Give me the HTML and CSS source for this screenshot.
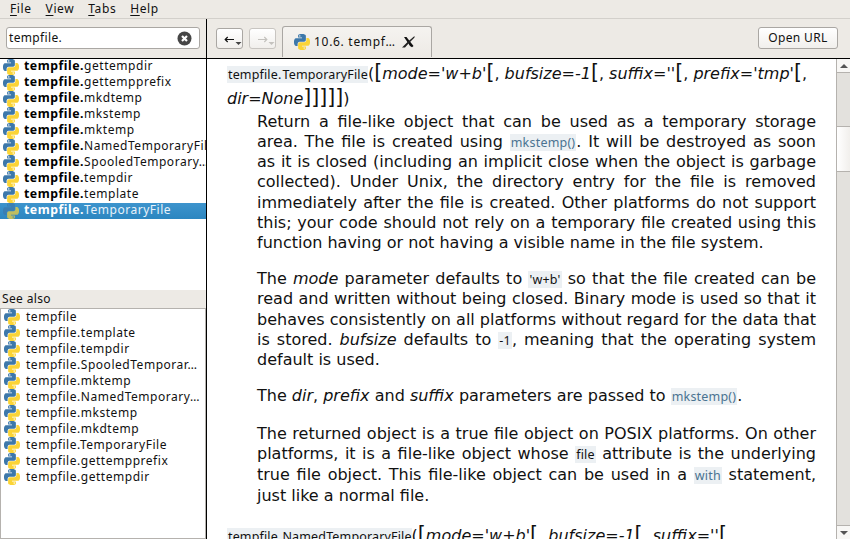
FILE: index.html
```html
<!DOCTYPE html>
<html lang="en">
<head>
<meta charset="utf-8">
<title>Documentation browser</title>
<link rel="stylesheet" href="styles.css">
</head>
<body>
<svg class="defs" width="0" height="0">
  <defs>
    <path id="snake" d="M14.25.18l.9.2.73.26.59.3.45.32.34.34.25.34.16.33.1.3.04.26.02.2-.01.13V8.5l-.05.63-.13.55-.21.46-.26.38-.3.31-.33.25-.35.19-.35.14-.33.1-.3.07-.26.04-.21.02H8.77l-.69.05-.59.14-.5.22-.41.27-.33.32-.27.35-.2.36-.15.37-.1.35-.07.32-.04.27-.02.21v3.06H3.17l-.21-.03-.28-.07-.32-.12-.35-.18-.36-.26-.36-.36-.35-.46-.32-.59-.28-.73-.21-.88-.14-1.05-.05-1.23.06-1.22.16-1.04.24-.87.32-.71.36-.57.4-.44.42-.33.42-.24.4-.16.36-.1.32-.05.24-.01h.16l.06.01h8.16v-.83H6.18l-.01-2.75-.02-.37.05-.34.11-.31.17-.28.25-.26.31-.23.38-.2.44-.18.51-.15.58-.12.64-.1.71-.06.77-.04.84-.02 1.27.05zm-6.3 1.98l-.23.33-.08.41.08.41.23.34.33.22.41.09.41-.09.33-.22.23-.34.08-.41-.08-.41-.23-.33-.33-.22-.41-.09-.41.09z"/>
    <symbol id="py" viewBox="0 0 24 24"><use href="#snake" fill="#3d78aa"/><use href="#snake" fill="#fbd436" transform="rotate(180 12 12)"/></symbol>
  </defs>
</svg>
<nav class="menu"><span><u>F</u>ile</span><span><u>V</u>iew</span><span><u>T</u>abs</span><span><u>H</u>elp</span></nav>
<div class="window">
  <aside class="side">
    <div class="searchbar"><div class="search"><span>tempfile.</span>
      <svg width="15" height="15" viewBox="0 0 15 15"><circle cx="7.5" cy="7.5" r="7" fill="#464646"/><path d="M5 5l5 5M10 5l-5 5" stroke="#fff" stroke-width="2.2"/></svg></div></div>
    <ul class="list results">
      <li><svg><use href="#py"/></svg><span><b>tempfile.</b>gettempdir</span></li>
      <li><svg><use href="#py"/></svg><span><b>tempfile.</b>gettempprefix</span></li>
      <li><svg><use href="#py"/></svg><span><b>tempfile.</b>mkdtemp</span></li>
      <li><svg><use href="#py"/></svg><span><b>tempfile.</b>mkstemp</span></li>
      <li><svg><use href="#py"/></svg><span><b>tempfile.</b>mktemp</span></li>
      <li><svg><use href="#py"/></svg><span><b>tempfile.</b>NamedTemporaryFile</span></li>
      <li><svg><use href="#py"/></svg><span><b>tempfile.</b>SpooledTemporary…</span></li>
      <li><svg><use href="#py"/></svg><span><b>tempfile.</b>tempdir</span></li>
      <li><svg><use href="#py"/></svg><span><b>tempfile.</b>template</span></li>
      <li class="selected"><svg><use href="#py"/></svg><span><b>tempfile.</b>TemporaryFile</span></li>
    </ul>
    <div class="heading">See also</div>
    <ul class="list related">
      <li><svg><use href="#py"/></svg><span>tempfile</span></li>
      <li><svg><use href="#py"/></svg><span>tempfile.template</span></li>
      <li><svg><use href="#py"/></svg><span>tempfile.tempdir</span></li>
      <li><svg><use href="#py"/></svg><span>tempfile.SpooledTemporar…</span></li>
      <li><svg><use href="#py"/></svg><span>tempfile.mktemp</span></li>
      <li><svg><use href="#py"/></svg><span>tempfile.NamedTemporary…</span></li>
      <li><svg><use href="#py"/></svg><span>tempfile.mkstemp</span></li>
      <li><svg><use href="#py"/></svg><span>tempfile.mkdtemp</span></li>
      <li><svg><use href="#py"/></svg><span>tempfile.TemporaryFile</span></li>
      <li><svg><use href="#py"/></svg><span>tempfile.gettempprefix</span></li>
      <li><svg><use href="#py"/></svg><span>tempfile.gettempdir</span></li>
    </ul>
  </aside>
  <main class="main">
    <div class="toolbar">
      <div class="btn nav"><svg width="25" height="19" viewBox="0 0 25 19"><path d="M8 10.5h9M10.700 8L8.200 10.5l2.500 2.500" fill="none" stroke="#111" stroke-width="1.2"/><path d="M18.500 13h6l-3 3z" fill="#444"/></svg></div>
      <div class="btn nav off"><svg width="25" height="19" viewBox="0 0 25 19"><path d="M8 10.5h9M14.300 8l2.500 2.500-2.500 2.500" fill="none" stroke="#c4c2be" stroke-width="1.2"/><path d="M18.500 13h6l-3 3z" fill="#c4c2be"/></svg></div>
      <div class="tab"><svg class="logo"><use href="#py"/></svg><span>10.6. tempf…</span><svg class="close" width="13" height="12" viewBox="0 0 13 12"><path d="M2 1h2.500L11.500 10 10 11.300 8 10z" fill="#111"/><path d="M12.500 0v1.500L7 7 3 11.500H0L5.500 6z" fill="#222"/></svg></div>
      <div class="btn open">Open URL</div>
    </div>
    <div class="view">
      <article class="doc">
        <div class="sig"><code>tempfile.</code><code>TemporaryFile</code>(<i class="br">[</i><em>mode='w+b'</em><i class="br">[</i>, <em>bufsize=-1</em><i class="br">[</i>, <em>suffix=''</em><i class="br">[</i>, <em>prefix='tmp'</em><i class="br">[</i>,<br><em>dir=None</em><i class="br">]</i><i class="br">]</i><i class="br">]</i><i class="br">]</i><i class="br">]</i>)</div>
        <div class="body">
          <p><span>Return a file-like object that can be used as a temporary storage</span><span>area. The file is created using <code class="link">mkstemp()</code>. It will be destroyed as soon</span><span>as it is closed (including an implicit close when the object is garbage</span><span>collected). Under Unix, the directory entry for the file is removed</span><span>immediately after the file is created. Other platforms do not support</span><span>this; your code should not rely on a temporary file created using this</span><span class="last">function having or not having a visible name in the file system.</span></p>
          <p><span>The <em>mode</em> parameter defaults to <code>'w+b'</code> so that the file created can be</span><span>read and written without being closed. Binary mode is used so that it</span><span>behaves consistently on all platforms without regard for the data that</span><span>is stored. <em>bufsize</em> defaults to <code>-1</code>, meaning that the operating system</span><span class="last">default is used.</span></p>
          <p><span class="last">The <em>dir</em>, <em>prefix</em> and <em>suffix</em> parameters are passed to <code class="link">mkstemp()</code>.</span></p>
          <p class="loose"><span>The returned object is a true file object on POSIX platforms. On other</span><span>platforms, it is a file-like object whose <code>file</code> attribute is the underlying</span><span>true file object. This file-like object can be used in a <code class="link">with</code> statement,</span><span class="last">just like a normal file.</span></p>
        </div>
        <div class="sig next"><code>tempfile.</code><code>NamedTemporaryFile</code>(<i class="br">[</i><em>mode='w+b'</em><i class="br">[</i>, <em>bufsize=-1</em><i class="br">[</i>, <em>suffix=''</em><i class="br">[</i>,</div>
      </article>
      <div class="scroll"><div class="arrow up"></div><div class="track"></div><div class="thumb"></div><div class="track rest"></div><div class="arrow down"></div></div>
    </div>
  </main>
</div>
</body>
</html>
```
FILE: styles.css
```css
* { box-sizing: border-box; }
body { margin: 0; width: 850px; height: 539px; overflow: hidden; background: #edeae5; color: #111; font: 12px/16px "Noto Sans", sans-serif; letter-spacing: .35px; font-variant-ligatures: none; }
.defs { display: block; height: 0; }
.menu { height: 19px; border-bottom: 1px solid #d3d0cb; display: flex; gap: 14px; padding: 1px 0 0 10px; letter-spacing: .6px; }
.menu u { text-decoration-thickness: 1px; text-underline-offset: 2px; }
.window { display: flex; height: 520px; }
.side { width: 207px; border-right: 1px solid #000; display: flex; flex-direction: column; overflow: hidden; }
.searchbar { height: 40px; border-bottom: 1px solid #000; padding: 8px 6px; flex: none; }
.search { height: 22px; border: 1px solid #aaa7a3; border-radius: 3px; background: #fff; display: flex; align-items: center; justify-content: space-between; padding: 0 7px 0 2px; }
.list { list-style: none; margin: 0; padding: 0; background: #fff; overflow: hidden; }
.list li { display: flex; height: 16px; align-items: center; white-space: nowrap; padding-left: 3px; }
.list svg { width: 16px; height: 16px; flex: none; margin-right: 5px; }
.list span { height: 16px; line-height: 15px; letter-spacing: .53px; }
.results { height: 231px; flex: none; }
.results span { line-height: 14px; }
.results b { color: #000; font-size: 12.300px; }
.selected { background: linear-gradient(#3d94cd, #2c86c0); color: #e8f2fa; }
.results .selected b { color: #fff; }
.selected svg { opacity: .7; }
.heading { height: 18px; padding-left: 2px; line-height: 18px; flex: none; }
.related { flex: 1; border: 1px solid #b5b2ae; }
.related svg { margin-right: 6px; }
.main { flex: 1; min-width: 0; display: flex; flex-direction: column; }
.toolbar { height: 40px; flex: none; border-bottom: 1px solid #000; display: flex; padding: 0 12px 0 9px; }
.btn { border: 1px solid #aaa7a3; border-radius: 3px; background: linear-gradient(#fff, #f1efec); height: 21px; margin-top: 9px; display: flex; align-items: center; justify-content: center; }
.nav { width: 27px; margin-right: 6px; }
.nav.off { border-color: #c8c5c1; }
.tab { width: 150px; height: 31px; margin-top: 7px; border: 1px solid #aaa7a3; border-bottom: 0; border-radius: 3px 3px 0 0; background: linear-gradient(#f5f3f0, #edeae5); display: flex; align-items: center; padding-left: 11px; }
.tab span { letter-spacing: .7px; }
.logo { width: 16px; height: 16px; margin-right: 4px; }
.close { margin-left: 6px; }
.open { width: 80px; margin-left: auto; margin-top: 8px; height: 22px; }
.view { flex: 1; min-height: 0; display: flex; background: #fff; }
.doc { flex: 1; min-width: 0; overflow: hidden; padding: 2px 20px 0; font: 16px/20.300px "DejaVu Sans", sans-serif; letter-spacing: 0; }
.sig { line-height: 25px; white-space: nowrap; height: 50.500px; }
.br { font-style: normal; font-size: 20.500px; line-height: 1; }
.doc code { font: 12.500px/16px "Noto Sans", sans-serif; letter-spacing: .2px; background: #ecf0f3; padding: 0 1px; }
.sig code { padding: 0; letter-spacing: .15px; }
.sig code:first-child { padding: 0 1px; }
.doc .link { color: #4a7391; }
.body { margin-left: 30px; width: 559px; }
.doc p { margin: 0 0 15.500px; }
.doc p span { display: block; height: 20.300px; white-space: nowrap; text-align-last: justify; }
.doc .loose { padding-top: 1.900px; }
.doc .loose span { height: 20.700px; }
.doc p .last { text-align-last: left; }
.doc .next { margin-top: 16.500px; }
.scroll { width: 14px; border-left: 1px solid #b5b2ae; background: #e3e1dd; display: flex; flex-direction: column; }
.arrow { height: 14px; background: #f8f7f5; display: flex; align-items: center; justify-content: center; border-bottom: 1px solid #b5b2ae; }
.arrow::before { content: ""; border: 4px solid transparent; border-top-width: 0; border-bottom: 4px solid #555; }
.down { border-bottom: 0; border-top: 1px solid #b5b2ae; }
.down::before { border-top: 4px solid #555; border-bottom: 0; }
.track { height: 53px; }
.thumb { height: 46px; background: linear-gradient(90deg, #fff, #f1efec); border: solid #b5b2ae; border-width: 1px 0; }
.rest { flex: 1; }
```
